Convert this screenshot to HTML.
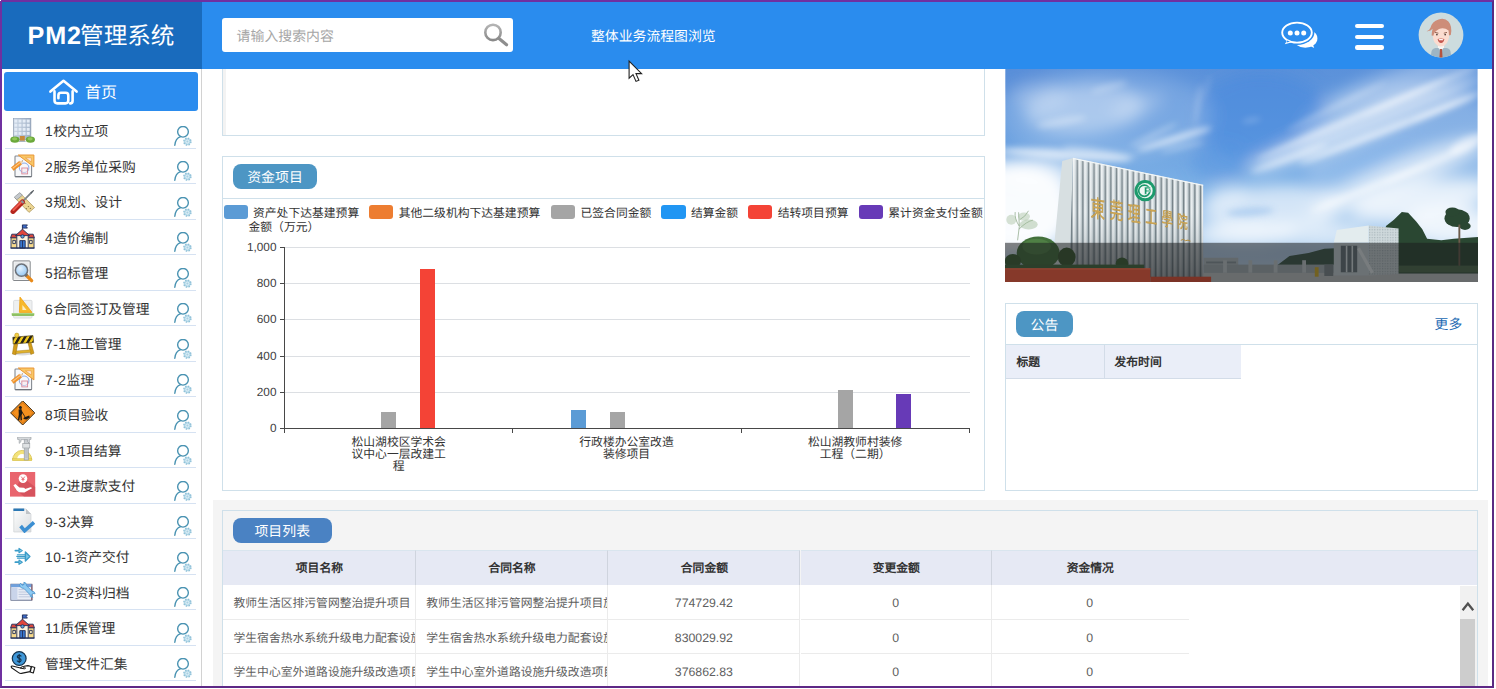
<!DOCTYPE html>
<html lang="zh-CN">
<head>
<meta charset="utf-8">
<title>PM2管理系统</title>
<style>
*{box-sizing:border-box;margin:0;padding:0}
html,body{width:1496px;height:689px;overflow:hidden;background:#fff}
body{font-family:"Liberation Sans",sans-serif;color:#333;position:relative;text-rendering:geometricPrecision}
.abs{position:absolute}
#frame{position:absolute;left:0;top:0;width:1494px;height:688px;border-style:solid;border-width:2px;border-color:#7030a0 #5a2a82 #5e2886 #7030a0;z-index:50;pointer-events:none}
#logo{z-index:6;position:absolute;left:2px;top:2px;width:200px;height:66.5px;background:#196bbd;color:#fff;font-size:23.6px;line-height:66px;white-space:nowrap}
#logo span{position:absolute;left:26px;top:1.4px}
#logo b{font-weight:bold;font-size:25.2px;letter-spacing:0.75px;position:relative;top:-0.7px;margin-right:-1.6px;margin-left:-0.4px}
#hdr{z-index:5;position:absolute;left:202px;top:2px;width:1290px;height:66.5px;background:#2a8cee}
#search{z-index:6;position:absolute;left:222px;top:18px;width:291px;height:34px;background:#fff;border-radius:3px}
#search span{position:absolute;left:14.6px;top:0.9px;line-height:35px;font-size:13.9px;color:#a6a6a6}
#navlink{z-index:6;position:absolute;left:591px;top:27.3px;font-size:13.85px;line-height:18px;color:#fff;white-space:nowrap}
/* sidebar */
#side{position:absolute;left:2px;top:68.5px;width:199.8px;height:618px;background:#fff;border-right:1px solid #d2d2d2}
#home{position:absolute;left:4px;top:72.3px;width:194px;height:39px;background:#2b8cee;border-radius:3px;color:#fff;font-size:16px}
#home span{position:absolute;left:81px;top:11.5px;line-height:20px}
.row{position:absolute;left:5px;width:191px;height:35.5px;border-bottom:1px solid #d6e2f2;font-size:13.75px;color:#333;white-space:nowrap}
.row .t{position:absolute;left:40px;top:10px;line-height:18px}
.row .t i{font-style:normal;letter-spacing:0.5px}
.row .ic{position:absolute;left:5px;top:4.3px;width:25px;height:25px}
.row .u{position:absolute;left:168.1px;top:12.7px;width:20px;height:20px}
/* panels */
.panel{position:absolute;background:#fff;border:1px solid #cfe0ea}
.badge{position:absolute;color:#fff;font-size:13.9px;text-align:center;border-radius:8px;background:#4d96c4;white-space:nowrap}
.lg{position:absolute;top:205.3px;width:24.4px;height:13.8px;border-radius:3px;margin-left:-0.7px}
.lt{position:absolute;margin-left:-0.5px;top:205.6px;font-size:11.8px;line-height:14px;color:#333;white-space:nowrap}
.yl{position:absolute;left:230px;width:46.5px;text-align:right;font-size:11.8px;line-height:14px;color:#3e3e3e}
.xl{position:absolute;width:200px;text-align:center;font-size:11.8px;line-height:12px;color:#333;top:436px}
.gl{position:absolute;left:285px;width:684.5px;height:1px;background:#dcdfe3}
.tk{position:absolute;left:279.6px;width:5px;height:1px;background:#484848}
.bar{position:absolute;width:15.4px}
.th{position:absolute;top:550.3px;height:35.3px;background:#e6e9f4;border-right:1px solid #cfd4de;border-top:1px solid #d9e5ee;border-bottom:1px solid #dadde6;font-size:11.8px;font-weight:bold;color:#333;text-align:center;line-height:34px;white-space:nowrap}
.td{position:absolute;height:34.3px;border-right:1px solid #ebebeb;border-bottom:1px solid #ebebeb;font-size:11.8px;color:#606060;line-height:36px;white-space:nowrap;overflow:hidden;background:#fff}
.td.l{padding-left:10.5px;text-align:left}
.td.c{text-align:center;font-size:12.3px}
</style>
</head>
<body>
<!-- header -->
<div id="hdr"></div>
<div id="logo"><span><b>PM2</b>管理系统</span></div>
<div id="search"><span>请输入搜索内容</span></div>
<div id="navlink">整体业务流程图浏览</div>

<!-- sidebar -->
<div id="side"></div>
<div id="home"><svg class="abs" style="left:42.5px;top:5px" width="34" height="32" viewBox="0 0 34 32"><g fill="none" stroke="#fff" stroke-width="2.6" stroke-linecap="round" stroke-linejoin="round"><path d="M3.4 14.6 L16.5 3.8 L29.6 14.6"/><path d="M7.5 14.4 V23.6 Q7.5 26.4 10.4 26.4 H18.4 Q21.3 26.4 21.3 23.6 V18.4 Q21.3 15.8 18.7 15.8 H14 Q11.4 15.8 11.4 18.4 V21.2"/><path d="M25.6 14.4 V23.8 Q25.6 26.4 23.2 26.4"/></g></svg><span>首页</span></div>

<!-- top empty panel -->
<div class="panel" style="left:222px;top:60px;width:763px;height:76px"></div>
<div class="abs" style="left:223px;top:68.5px;width:3px;height:66px;background:#f3f3f3"></div>

<!-- chart panel -->
<div class="panel" style="left:222px;top:156px;width:763px;height:334.5px"></div>
<div class="abs" style="left:222px;top:197.5px;width:763px;height:1px;background:#cfe0ea"></div>
<div class="badge" style="left:233px;top:163.5px;width:84px;height:25px;line-height:27.4px">资金项目</div>

<!-- gray section -->
<div class="abs" style="left:213px;top:499.5px;width:1275px;height:187px;background:#f4f4f4"></div>
<div class="panel" style="left:222px;top:510px;width:1256px;height:180px;background:#f4f4f4"></div>
<div class="badge" style="left:233px;top:518.3px;width:98.5px;height:25px;line-height:27px;background:#4a82c3">项目列表</div>

<!-- notice panel -->
<div class="panel" style="left:1005px;top:303px;width:473px;height:187.5px"></div>
<div class="abs" style="left:1005px;top:343.7px;width:473px;height:1px;background:#cfe0ea"></div>
<div class="badge" style="left:1016px;top:311px;width:57px;height:26px;line-height:28px">公告</div>
<div class="abs" style="left:1434.6px;top:315.2px;font-size:13.8px;line-height:20px;color:#2268b2;white-space:nowrap">更多</div>
<div class="abs" style="left:1006px;top:344.7px;width:235px;height:34px;background:#eaeef8;border-bottom:1px solid #d3dce8"></div>
<div class="abs" style="left:1104px;top:344.7px;width:1px;height:34px;background:#d3dce8"></div>
<div class="abs" style="left:1016.5px;top:353px;font-size:11.8px;font-weight:bold;line-height:18px;color:#333;white-space:nowrap">标题</div>
<div class="abs" style="left:1114.5px;top:353px;font-size:11.8px;font-weight:bold;line-height:18px;color:#333;white-space:nowrap">发布时间</div>

<div class="row" style="top:113.3px"><div class="ic"><svg width="25" height="25" viewBox="0 0 25 25"><defs><linearGradient id="bl1" x1="0" y1="0" x2="1" y2="0"><stop offset="0" stop-color="#c9d5e4"/><stop offset="1" stop-color="#9fb0c6"/></linearGradient></defs><rect x="3.3" y="0" width="17.6" height="21.4" fill="url(#bl1)" stroke="#8595aa" stroke-width="0.6"/><g fill="#e4ecf6"><rect x="4.4" y="1.6" width="3" height="3"/><rect x="8.5" y="1.6" width="3" height="3"/><rect x="12.6" y="1.6" width="3" height="3"/><rect x="16.7" y="1.6" width="3" height="3"/><rect x="4.4" y="5.7" width="3" height="3"/><rect x="8.5" y="5.7" width="3" height="3"/><rect x="12.6" y="5.7" width="3" height="3"/><rect x="16.7" y="5.7" width="3" height="3"/><rect x="4.4" y="9.8" width="3" height="3"/><rect x="8.5" y="9.8" width="3" height="3"/><rect x="12.6" y="9.8" width="3" height="3"/><rect x="16.7" y="9.8" width="3" height="3"/><rect x="4.4" y="13.9" width="3" height="3"/><rect x="8.5" y="13.9" width="3" height="3"/><rect x="12.6" y="13.9" width="3" height="3"/><rect x="16.7" y="13.9" width="3" height="3"/></g><rect x="9.8" y="18" width="5" height="5.2" fill="#c98a3c"/><rect x="9" y="22.6" width="6.6" height="1.4" fill="#a8b4bf"/><ellipse cx="4.9" cy="21.6" rx="4.6" ry="3.2" fill="#6aa83a"/><ellipse cx="20.4" cy="21.6" rx="4.6" ry="3.2" fill="#6aa83a"/><ellipse cx="4.6" cy="20.8" rx="2.6" ry="1.6" fill="#93c85a"/><ellipse cx="20.1" cy="20.8" rx="2.6" ry="1.6" fill="#93c85a"/></svg>
</div><div class="t"><i>1</i>校内立项</div><div class="u"><svg width="20" height="20" viewBox="0 0 20 20"><circle cx="10" cy="5.8" r="5.35" fill="none" stroke="#4a93b2" stroke-width="1.4"/><path d="M1.8 19.2 Q2.4 12.4 7.6 10.6" fill="none" stroke="#4a93b2" stroke-width="1.4" stroke-linecap="round"/><circle cx="14.4" cy="15.6" r="3.5" fill="#cfe6f1" stroke="#8fc1d8" stroke-width="1.5" stroke-dasharray="1.5 1.25"/><circle cx="14.4" cy="15.6" r="2.6" fill="#d9ecf5" stroke="#9ccbe0" stroke-width="0.8"/><circle cx="14.4" cy="15.6" r="1" fill="#a9d0e2"/></svg>
</div></div>
<div class="row" style="top:148.8px"><div class="ic"><svg width="25" height="25" viewBox="0 0 25 25"><rect x="5" y="3" width="16.6" height="20.8" rx="0.8" fill="#f7f8fa" stroke="#858a92" stroke-width="1.1"/><path d="M5.2 23.6 H21.4" stroke="#6f747c" stroke-width="1.2"/><circle cx="14.1" cy="14.8" r="4.8" fill="none" stroke="#7da0e4" stroke-width="0.9"/><rect x="11.8" y="15" width="5.8" height="5.9" fill="#f6e6ec" fill-opacity="0.5" stroke="#d98a9a" stroke-width="0.9"/><path d="M8.3 2 L23.9 2 L23.9 13.9 Z" fill="#f8c766" stroke="#ea9636" stroke-width="1" stroke-linejoin="round"/><path d="M15.5 4.8 L21.3 4.8 L21.3 9 Z" fill="#fbe9e0" stroke="#ea9636" stroke-width="0.6"/><path d="M3.6 17.4 L1.4 14.4 L9.4 8.2 L11.7 11.2 Z" fill="#f4952a" stroke="#de7c12" stroke-width="0.5"/><path d="M2.6 15.4 L10.2 9.6" stroke="#fcc88a" stroke-width="1.1"/><path d="M9.4 8.2 L13 7.4 L11.7 11.2 Z" fill="#f3d3ac"/><path d="M12 7.7 L13 7.4 L12.6 8.5 Z" fill="#444"/></svg>
</div><div class="t"><i>2</i>服务单位采购</div><div class="u"><svg width="20" height="20" viewBox="0 0 20 20"><circle cx="10" cy="5.8" r="5.35" fill="none" stroke="#4a93b2" stroke-width="1.4"/><path d="M1.8 19.2 Q2.4 12.4 7.6 10.6" fill="none" stroke="#4a93b2" stroke-width="1.4" stroke-linecap="round"/><circle cx="14.4" cy="15.6" r="3.5" fill="#cfe6f1" stroke="#8fc1d8" stroke-width="1.5" stroke-dasharray="1.5 1.25"/><circle cx="14.4" cy="15.6" r="2.6" fill="#d9ecf5" stroke="#9ccbe0" stroke-width="0.8"/><circle cx="14.4" cy="15.6" r="1" fill="#a9d0e2"/></svg>
</div></div>
<div class="row" style="top:184.3px"><div class="ic"><svg width="25" height="25" viewBox="0 0 25 25"><path d="M5 9 L10.4 4.6 L24.6 18.6 L19 23.4 Z" fill="#ecd592" stroke="#a8925a" stroke-width="0.7" stroke-linejoin="round"/><path d="M4.2 8.2 L9.8 3.6 L12.4 6.2 L6.8 10.8 Z" fill="#c4c8cc" stroke="#80868c" stroke-width="0.6"/><g fill="#8a7a4a"><circle cx="15" cy="14.4" r="0.7"/><circle cx="18.4" cy="17.6" r="0.7"/><circle cx="16.4" cy="19.6" r="0.7"/><circle cx="20.4" cy="19.4" r="0.7"/></g><path d="M13 12.2 L21.6 3.4" stroke="#7c8288" stroke-width="1.7" stroke-linecap="round"/><path d="M21.2 3.8 L23.4 1.6" stroke="#555b60" stroke-width="1.3" stroke-linecap="round"/><path d="M3 22.4 L12.4 13" stroke="#b5251d" stroke-width="5" stroke-linecap="round"/><path d="M3.4 21 L11.4 13" stroke="#ee5a4c" stroke-width="2" stroke-linecap="round"/><path d="M11.4 11.8 L13.6 14" stroke="#8d9399" stroke-width="2.2"/></svg>
</div><div class="t"><i>3</i>规划、设计</div><div class="u"><svg width="20" height="20" viewBox="0 0 20 20"><circle cx="10" cy="5.8" r="5.35" fill="none" stroke="#4a93b2" stroke-width="1.4"/><path d="M1.8 19.2 Q2.4 12.4 7.6 10.6" fill="none" stroke="#4a93b2" stroke-width="1.4" stroke-linecap="round"/><circle cx="14.4" cy="15.6" r="3.5" fill="#cfe6f1" stroke="#8fc1d8" stroke-width="1.5" stroke-dasharray="1.5 1.25"/><circle cx="14.4" cy="15.6" r="2.6" fill="#d9ecf5" stroke="#9ccbe0" stroke-width="0.8"/><circle cx="14.4" cy="15.6" r="1" fill="#a9d0e2"/></svg>
</div></div>
<div class="row" style="top:219.7px"><div class="ic"><svg width="25" height="25" viewBox="0 0 25 25"><g stroke="#23305a" stroke-width="0.9" stroke-linejoin="round"><path d="M12.4 0.8 V6" fill="none"/><path d="M12.6 0.9 H17.4 L16.2 2.5 L17.4 4.1 H12.6 Z" fill="#3d6fd0"/><rect x="1" y="13.6" width="6.6" height="10.4" fill="#f6d98a"/><rect x="17.4" y="13.6" width="6.6" height="10.4" fill="#f6d98a"/><path d="M0.6 13.8 L1.8 10.2 H7.6 V13.8 Z" fill="#d8483e"/><path d="M24.4 13.8 L23.2 10.2 H17.4 V13.8 Z" fill="#d8483e"/><rect x="6.8" y="10.6" width="11.4" height="13.4" fill="#fbf1dc"/><path d="M5.4 11.6 L12.5 5.2 L19.6 11.6 Z" fill="#e0453b"/><circle cx="12.5" cy="12.4" r="1.7" fill="#5ea2dc"/><rect x="9.8" y="16.6" width="5.4" height="7.4" fill="#3a78d0"/><path d="M12.5 16.6 V24" fill="none"/><rect x="2.8" y="16.4" width="2.6" height="3.2" fill="#fbeec4"/><rect x="19.6" y="16.4" width="2.6" height="3.2" fill="#fbeec4"/><path d="M0.4 24.1 H24.6" fill="none" stroke-width="1.1"/></g></svg>
</div><div class="t"><i>4</i>造价编制</div><div class="u"><svg width="20" height="20" viewBox="0 0 20 20"><circle cx="10" cy="5.8" r="5.35" fill="none" stroke="#4a93b2" stroke-width="1.4"/><path d="M1.8 19.2 Q2.4 12.4 7.6 10.6" fill="none" stroke="#4a93b2" stroke-width="1.4" stroke-linecap="round"/><circle cx="14.4" cy="15.6" r="3.5" fill="#cfe6f1" stroke="#8fc1d8" stroke-width="1.5" stroke-dasharray="1.5 1.25"/><circle cx="14.4" cy="15.6" r="2.6" fill="#d9ecf5" stroke="#9ccbe0" stroke-width="0.8"/><circle cx="14.4" cy="15.6" r="1" fill="#a9d0e2"/></svg>
</div></div>
<div class="row" style="top:255.2px"><div class="ic"><svg width="25" height="25" viewBox="0 0 25 25"><defs><radialGradient id="ln" cx="0.4" cy="0.35" r="0.7"><stop offset="0" stop-color="#e4f2ff"/><stop offset="1" stop-color="#8fc4f2"/></radialGradient></defs><rect x="3" y="1.9" width="17.2" height="19.6" rx="1" fill="#f2f3f4" stroke="#85888c" stroke-width="1"/><rect x="4.6" y="3.5" width="14" height="16.4" fill="#e6e8ea"/><path d="M16 16 L21.6 21.6" stroke="#e88a1a" stroke-width="3.4" stroke-linecap="round"/><path d="M15.6 15.6 L17 17" stroke="#6a6e74" stroke-width="3"/><circle cx="11.5" cy="11.2" r="6.1" fill="url(#ln)" stroke="#6d727a" stroke-width="1.5"/></svg>
</div><div class="t"><i>5</i>招标管理</div><div class="u"><svg width="20" height="20" viewBox="0 0 20 20"><circle cx="10" cy="5.8" r="5.35" fill="none" stroke="#4a93b2" stroke-width="1.4"/><path d="M1.8 19.2 Q2.4 12.4 7.6 10.6" fill="none" stroke="#4a93b2" stroke-width="1.4" stroke-linecap="round"/><circle cx="14.4" cy="15.6" r="3.5" fill="#cfe6f1" stroke="#8fc1d8" stroke-width="1.5" stroke-dasharray="1.5 1.25"/><circle cx="14.4" cy="15.6" r="2.6" fill="#d9ecf5" stroke="#9ccbe0" stroke-width="0.8"/><circle cx="14.4" cy="15.6" r="1" fill="#a9d0e2"/></svg>
</div></div>
<div class="row" style="top:290.7px"><div class="ic"><svg width="25" height="25" viewBox="0 0 25 25"><rect x="3.6" y="5.4" width="18.4" height="17.6" rx="1" fill="#eef0f1" stroke="#d3d6d9" stroke-width="0.8"/><path d="M10 2.1 L22 17.4 L9.4 17.4 Z" fill="#f7b92c" stroke="#f0a010" stroke-width="0.8" stroke-linejoin="round"/><path d="M12.4 10 L16.6 15 L12.4 15 Z" fill="#fdecc0"/><rect x="1.7" y="17.9" width="22.6" height="3.2" rx="1" fill="#8ec063"/><rect x="1.7" y="17.9" width="22.6" height="1.2" rx="0.6" fill="#a9d484"/></svg>
</div><div class="t"><i>6</i>合同签订及管理</div><div class="u"><svg width="20" height="20" viewBox="0 0 20 20"><circle cx="10" cy="5.8" r="5.35" fill="none" stroke="#4a93b2" stroke-width="1.4"/><path d="M1.8 19.2 Q2.4 12.4 7.6 10.6" fill="none" stroke="#4a93b2" stroke-width="1.4" stroke-linecap="round"/><circle cx="14.4" cy="15.6" r="3.5" fill="#cfe6f1" stroke="#8fc1d8" stroke-width="1.5" stroke-dasharray="1.5 1.25"/><circle cx="14.4" cy="15.6" r="2.6" fill="#d9ecf5" stroke="#9ccbe0" stroke-width="0.8"/><circle cx="14.4" cy="15.6" r="1" fill="#a9d0e2"/></svg>
</div></div>
<div class="row" style="top:326.2px"><div class="ic"><svg width="25" height="26" viewBox="0 0 25 26"><defs><pattern id="hz" width="5.6" height="8" patternUnits="userSpaceOnUse" patternTransform="skewX(-30)"><rect width="5.6" height="8" fill="#f5cc1c"/><rect width="2.9" height="8" fill="#2a2418"/></pattern></defs><g transform="translate(0 1.6)"><ellipse cx="12.5" cy="21.8" rx="9.8" ry="2" fill="#dcdcdc"/><path d="M5.2 5.2 L2.4 22.4 L5.8 23.2 L8.8 6 Z" fill="#d29c1a" stroke="#9c700c" stroke-width="0.5"/><path d="M19.4 5.2 L24 21.6 L20.8 22.8 L16.8 6 Z" fill="#d29c1a" stroke="#9c700c" stroke-width="0.5"/><path d="M6.2 19.4 L20.6 18.2 L21 20.6 L6 22 Z" fill="#e0b22c" stroke="#9c700c" stroke-width="0.4"/><path d="M2.8 5.6 L23 4 L23.6 10.8 L3.2 12.4 Z" fill="url(#hz)" stroke="#4a3c10" stroke-width="0.6"/><circle cx="6.8" cy="3.6" r="2.1" fill="#f2cf46" stroke="#b0840f" stroke-width="0.5"/></g></svg>
</div><div class="t"><i>7-1</i>施工管理</div><div class="u"><svg width="20" height="20" viewBox="0 0 20 20"><circle cx="10" cy="5.8" r="5.35" fill="none" stroke="#4a93b2" stroke-width="1.4"/><path d="M1.8 19.2 Q2.4 12.4 7.6 10.6" fill="none" stroke="#4a93b2" stroke-width="1.4" stroke-linecap="round"/><circle cx="14.4" cy="15.6" r="3.5" fill="#cfe6f1" stroke="#8fc1d8" stroke-width="1.5" stroke-dasharray="1.5 1.25"/><circle cx="14.4" cy="15.6" r="2.6" fill="#d9ecf5" stroke="#9ccbe0" stroke-width="0.8"/><circle cx="14.4" cy="15.6" r="1" fill="#a9d0e2"/></svg>
</div></div>
<div class="row" style="top:361.7px"><div class="ic"><svg width="25" height="25" viewBox="0 0 25 25"><rect x="5" y="3" width="16.6" height="20.8" rx="0.8" fill="#f7f8fa" stroke="#858a92" stroke-width="1.1"/><path d="M5.2 23.6 H21.4" stroke="#6f747c" stroke-width="1.2"/><circle cx="14.1" cy="14.8" r="4.8" fill="none" stroke="#7da0e4" stroke-width="0.9"/><rect x="11.8" y="15" width="5.8" height="5.9" fill="#f6e6ec" fill-opacity="0.5" stroke="#d98a9a" stroke-width="0.9"/><path d="M8.3 2 L23.9 2 L23.9 13.9 Z" fill="#f8c766" stroke="#ea9636" stroke-width="1" stroke-linejoin="round"/><path d="M15.5 4.8 L21.3 4.8 L21.3 9 Z" fill="#fbe9e0" stroke="#ea9636" stroke-width="0.6"/><path d="M3.6 17.4 L1.4 14.4 L9.4 8.2 L11.7 11.2 Z" fill="#f4952a" stroke="#de7c12" stroke-width="0.5"/><path d="M2.6 15.4 L10.2 9.6" stroke="#fcc88a" stroke-width="1.1"/><path d="M9.4 8.2 L13 7.4 L11.7 11.2 Z" fill="#f3d3ac"/><path d="M12 7.7 L13 7.4 L12.6 8.5 Z" fill="#444"/></svg>
</div><div class="t"><i>7-2</i>监理</div><div class="u"><svg width="20" height="20" viewBox="0 0 20 20"><circle cx="10" cy="5.8" r="5.35" fill="none" stroke="#4a93b2" stroke-width="1.4"/><path d="M1.8 19.2 Q2.4 12.4 7.6 10.6" fill="none" stroke="#4a93b2" stroke-width="1.4" stroke-linecap="round"/><circle cx="14.4" cy="15.6" r="3.5" fill="#cfe6f1" stroke="#8fc1d8" stroke-width="1.5" stroke-dasharray="1.5 1.25"/><circle cx="14.4" cy="15.6" r="2.6" fill="#d9ecf5" stroke="#9ccbe0" stroke-width="0.8"/><circle cx="14.4" cy="15.6" r="1" fill="#a9d0e2"/></svg>
</div></div>
<div class="row" style="top:397.1px"><div class="ic"><svg width="25" height="25" viewBox="0 0 25 25"><path d="M12.7 -0.2 L24.8 11.9 L12.7 24 L0.6 11.9 Z" fill="#f5901e" stroke="#3a2a14" stroke-width="1" stroke-linejoin="round"/><path d="M12.7 1.8 L22.8 11.9 L12.7 22 L2.6 11.9 Z" fill="none" stroke="#c96a0c" stroke-width="0.6"/><g fill="#1e1a16"><circle cx="10.4" cy="6.4" r="1.5"/><path d="M8.6 8.4 L11.4 8 L12.4 12.2 L11.6 14.2 L12 19.2 L10.6 19.2 L10.2 15 L9.2 19.2 L7.8 19.2 L8.8 13.4 Z"/><path d="M11.6 9.6 L15.6 16.2 L15 16.6 L11 10 Z"/><path d="M14 16.4 L19.2 14.4 L19.8 16.6 L16.4 18.4 L13.4 18 Z"/></g></svg>
</div><div class="t"><i>8</i>项目验收</div><div class="u"><svg width="20" height="20" viewBox="0 0 20 20"><circle cx="10" cy="5.8" r="5.35" fill="none" stroke="#4a93b2" stroke-width="1.4"/><path d="M1.8 19.2 Q2.4 12.4 7.6 10.6" fill="none" stroke="#4a93b2" stroke-width="1.4" stroke-linecap="round"/><circle cx="14.4" cy="15.6" r="3.5" fill="#cfe6f1" stroke="#8fc1d8" stroke-width="1.5" stroke-dasharray="1.5 1.25"/><circle cx="14.4" cy="15.6" r="2.6" fill="#d9ecf5" stroke="#9ccbe0" stroke-width="0.8"/><circle cx="14.4" cy="15.6" r="1" fill="#a9d0e2"/></svg>
</div></div>
<div class="row" style="top:432.6px"><div class="ic"><svg width="25" height="25" viewBox="0 0 25 25"><path d="M2.6 23 A9.6 9.6 0 0 1 21.8 23 Z" fill="#f3e27a" stroke="#d6c04a" stroke-width="0.8"/><path d="M7.2 22 A5 5 0 0 1 17.2 22 Z" fill="#fff"/><rect x="2.6" y="21.6" width="19.2" height="2" fill="#ecd860" stroke="#d6c04a" stroke-width="0.5"/><rect x="14.2" y="0.4" width="4.2" height="22.6" fill="#c9cdd1" stroke="#92979c" stroke-width="0.6"/><path d="M7.6 0 H21 V2.4 H19.4 V6.4 L17.6 4.6 V2.6 H11 V4.6 L9.2 6.4 V2.4 H7.6 Z" fill="#d6d9dc" stroke="#92979c" stroke-width="0.6" stroke-linejoin="round"/><rect x="12.8" y="6.6" width="7" height="4.4" fill="#dfe2e4" stroke="#92979c" stroke-width="0.6"/><path d="M15.2 12 V21 M16.4 12 V21 M17.4 12 V21" stroke="#a4a9ae" stroke-width="0.3"/></svg>
</div><div class="t"><i>9-1</i>项目结算</div><div class="u"><svg width="20" height="20" viewBox="0 0 20 20"><circle cx="10" cy="5.8" r="5.35" fill="none" stroke="#4a93b2" stroke-width="1.4"/><path d="M1.8 19.2 Q2.4 12.4 7.6 10.6" fill="none" stroke="#4a93b2" stroke-width="1.4" stroke-linecap="round"/><circle cx="14.4" cy="15.6" r="3.5" fill="#cfe6f1" stroke="#8fc1d8" stroke-width="1.5" stroke-dasharray="1.5 1.25"/><circle cx="14.4" cy="15.6" r="2.6" fill="#d9ecf5" stroke="#9ccbe0" stroke-width="0.8"/><circle cx="14.4" cy="15.6" r="1" fill="#a9d0e2"/></svg>
</div></div>
<div class="row" style="top:468.1px"><div class="ic"><svg width="26" height="25" viewBox="0 0 26 25"><rect x="0" y="0" width="25.2" height="24.6" fill="#e9656e"/><path d="M12 5 L25.2 15 V24.6 H14 L5 17 Z" fill="#cf4e58" opacity="0.75"/><circle cx="13" cy="6.6" r="4.3" fill="#fff"/><path d="M11.2 4.6 L13 7 L14.8 4.6 M13 7 V9.4 M11.4 7.4 H14.6" stroke="#e9656e" stroke-width="0.9" fill="none"/><path d="M3.4 13.2 L5.4 12 L9.4 15.6 L13.4 15.8 Q15 15.8 15 17 L19.6 15.4 Q21.6 14.8 22 16.2 L14.4 20.4 L9 20.2 L6.8 18.6 Z" fill="#fff"/></svg>
</div><div class="t"><i>9-2</i>进度款支付</div><div class="u"><svg width="20" height="20" viewBox="0 0 20 20"><circle cx="10" cy="5.8" r="5.35" fill="none" stroke="#4a93b2" stroke-width="1.4"/><path d="M1.8 19.2 Q2.4 12.4 7.6 10.6" fill="none" stroke="#4a93b2" stroke-width="1.4" stroke-linecap="round"/><circle cx="14.4" cy="15.6" r="3.5" fill="#cfe6f1" stroke="#8fc1d8" stroke-width="1.5" stroke-dasharray="1.5 1.25"/><circle cx="14.4" cy="15.6" r="2.6" fill="#d9ecf5" stroke="#9ccbe0" stroke-width="0.8"/><circle cx="14.4" cy="15.6" r="1" fill="#a9d0e2"/></svg>
</div></div>
<div class="row" style="top:503.6px"><div class="ic"><svg width="25" height="25" viewBox="0 0 25 25"><defs><linearGradient id="dg" x1="0" y1="0" x2="1" y2="1"><stop offset="0" stop-color="#fdfdfd"/><stop offset="1" stop-color="#d9dde0"/></linearGradient></defs><path d="M3.8 1 H16 L21 6 V24 H3.8 Z" fill="url(#dg)" stroke="#d0d3d6" stroke-width="0.7"/><path d="M16 1 V6 H21 Z" fill="#bfc3c7"/><rect x="3.4" y="0.5" width="10.8" height="2.5" fill="#2c78b4"/><path d="M10.6 18 L14.6 22.8 L24 14.4" fill="none" stroke="#3c8fd2" stroke-width="3.6" stroke-linejoin="miter"/></svg>
</div><div class="t"><i>9-3</i>决算</div><div class="u"><svg width="20" height="20" viewBox="0 0 20 20"><circle cx="10" cy="5.8" r="5.35" fill="none" stroke="#4a93b2" stroke-width="1.4"/><path d="M1.8 19.2 Q2.4 12.4 7.6 10.6" fill="none" stroke="#4a93b2" stroke-width="1.4" stroke-linecap="round"/><circle cx="14.4" cy="15.6" r="3.5" fill="#cfe6f1" stroke="#8fc1d8" stroke-width="1.5" stroke-dasharray="1.5 1.25"/><circle cx="14.4" cy="15.6" r="2.6" fill="#d9ecf5" stroke="#9ccbe0" stroke-width="0.8"/><circle cx="14.4" cy="15.6" r="1" fill="#a9d0e2"/></svg>
</div></div>
<div class="row" style="top:539.1px"><div class="ic"><svg width="25" height="25" viewBox="0 0 25 25"><g transform="translate(0 0.9)" fill="none" stroke="#3a9cc8" stroke-linejoin="round" stroke-linecap="round"><path d="M5.4 6.7 H9.4" stroke-width="1.8"/><path d="M9 4.5 L12.3 6.7 L9 8.9 Z" fill="#8fd0ea" stroke-width="1.1"/><path d="M5.4 18.3 H9.4" stroke-width="1.8"/><path d="M9 16.1 L12.3 18.3 L9 20.5 Z" fill="#8fd0ea" stroke-width="1.1"/><path d="M7.4 10.8 H15.4 M6.8 12.5 H15.4 M7.4 14.2 H15.4" stroke-width="1.15"/><path d="M15.4 8 L19.9 12.5 L15.4 17 Z" fill="#7cc6e6" stroke-width="1.4"/></g></svg>
</div><div class="t"><i>10-1</i>资产交付</div><div class="u"><svg width="20" height="20" viewBox="0 0 20 20"><circle cx="10" cy="5.8" r="5.35" fill="none" stroke="#4a93b2" stroke-width="1.4"/><path d="M1.8 19.2 Q2.4 12.4 7.6 10.6" fill="none" stroke="#4a93b2" stroke-width="1.4" stroke-linecap="round"/><circle cx="14.4" cy="15.6" r="3.5" fill="#cfe6f1" stroke="#8fc1d8" stroke-width="1.5" stroke-dasharray="1.5 1.25"/><circle cx="14.4" cy="15.6" r="2.6" fill="#d9ecf5" stroke="#9ccbe0" stroke-width="0.8"/><circle cx="14.4" cy="15.6" r="1" fill="#a9d0e2"/></svg>
</div></div>
<div class="row" style="top:574.5px"><div class="ic"><svg width="26" height="25" viewBox="0 0 26 25"><rect x="0.9" y="5.2" width="21" height="16" fill="#e9edf6" stroke="#4a5578" stroke-width="0.8"/><rect x="0.9" y="5.2" width="21" height="2.9" fill="#6fa0dc"/><rect x="1.4" y="8.4" width="6" height="12.4" fill="#c9d4ea"/><path d="M8.6 10.6 H20.6 M8.6 13 H20.6 M8.6 15.4 H20.6 M8.6 17.8 H20.6" stroke="#b4bfd8" stroke-width="0.8"/><path d="M21.9 5.4 V21.2" stroke="#8a4a50" stroke-width="0.9"/><path transform="translate(-0.6 1.6) scale(1.02)" d="M10.4 5.6 Q9.4 3.6 11 2.6 L12.6 4.6 L14.4 3.8 L14.2 1.6 Q17 2 16.8 5 L22.4 10.6 Q24.6 10.2 25.2 13 L23 12.6 L21.8 14.2 L23 16.4 Q20.2 16.4 20 13.6 L14.2 7.6 Q11.6 8 10.4 5.6 Z" fill="#8ecaf2" stroke="#4a94cc" stroke-width="0.8" stroke-linejoin="round"/></svg>
</div><div class="t"><i>10-2</i>资料归档</div><div class="u"><svg width="20" height="20" viewBox="0 0 20 20"><circle cx="10" cy="5.8" r="5.35" fill="none" stroke="#4a93b2" stroke-width="1.4"/><path d="M1.8 19.2 Q2.4 12.4 7.6 10.6" fill="none" stroke="#4a93b2" stroke-width="1.4" stroke-linecap="round"/><circle cx="14.4" cy="15.6" r="3.5" fill="#cfe6f1" stroke="#8fc1d8" stroke-width="1.5" stroke-dasharray="1.5 1.25"/><circle cx="14.4" cy="15.6" r="2.6" fill="#d9ecf5" stroke="#9ccbe0" stroke-width="0.8"/><circle cx="14.4" cy="15.6" r="1" fill="#a9d0e2"/></svg>
</div></div>
<div class="row" style="top:610.0px"><div class="ic"><svg width="25" height="25" viewBox="0 0 25 25"><g stroke="#23305a" stroke-width="0.9" stroke-linejoin="round"><path d="M12.4 0.8 V6" fill="none"/><path d="M12.6 0.9 H17.4 L16.2 2.5 L17.4 4.1 H12.6 Z" fill="#3d6fd0"/><rect x="1" y="13.6" width="6.6" height="10.4" fill="#f6d98a"/><rect x="17.4" y="13.6" width="6.6" height="10.4" fill="#f6d98a"/><path d="M0.6 13.8 L1.8 10.2 H7.6 V13.8 Z" fill="#d8483e"/><path d="M24.4 13.8 L23.2 10.2 H17.4 V13.8 Z" fill="#d8483e"/><rect x="6.8" y="10.6" width="11.4" height="13.4" fill="#fbf1dc"/><path d="M5.4 11.6 L12.5 5.2 L19.6 11.6 Z" fill="#e0453b"/><circle cx="12.5" cy="12.4" r="1.7" fill="#5ea2dc"/><rect x="9.8" y="16.6" width="5.4" height="7.4" fill="#3a78d0"/><path d="M12.5 16.6 V24" fill="none"/><rect x="2.8" y="16.4" width="2.6" height="3.2" fill="#fbeec4"/><rect x="19.6" y="16.4" width="2.6" height="3.2" fill="#fbeec4"/><path d="M0.4 24.1 H24.6" fill="none" stroke-width="1.1"/></g></svg>
</div><div class="t"><i>11</i>质保管理</div><div class="u"><svg width="20" height="20" viewBox="0 0 20 20"><circle cx="10" cy="5.8" r="5.35" fill="none" stroke="#4a93b2" stroke-width="1.4"/><path d="M1.8 19.2 Q2.4 12.4 7.6 10.6" fill="none" stroke="#4a93b2" stroke-width="1.4" stroke-linecap="round"/><circle cx="14.4" cy="15.6" r="3.5" fill="#cfe6f1" stroke="#8fc1d8" stroke-width="1.5" stroke-dasharray="1.5 1.25"/><circle cx="14.4" cy="15.6" r="2.6" fill="#d9ecf5" stroke="#9ccbe0" stroke-width="0.8"/><circle cx="14.4" cy="15.6" r="1" fill="#a9d0e2"/></svg>
</div></div>
<div class="row" style="top:645.5px"><div class="ic"><svg width="26" height="28" viewBox="0 0 26 28"><circle cx="9.2" cy="8.5" r="6.9" fill="#3f97d8" stroke="#14324c" stroke-width="1.2"/><path d="M11.4 6.4 Q9.6 4.7 7.8 5.8 Q6.4 7.2 9.2 8.4 Q12 9.6 10.6 11.2 Q8.8 12.4 6.9 10.6 M9.2 4 V13" fill="none" stroke="#14324c" stroke-width="1.2"/><path d="M1.2 16.8 Q1 15.8 2.4 16 L10.4 18 Q11.4 16.4 14 16.2 L18 15.6 Q19.6 15.6 21.2 17.2 L20 21.6 L11.4 23.4 Q10 23.6 8.6 22.6 L1.6 17.8 Z" fill="#fff" stroke="#1a1a1a" stroke-width="1.1" stroke-linejoin="round"/><path d="M10.6 18.2 L14.4 18.8 Q15.6 18.8 15.4 17.8 Q15 17.1 13.6 17.3" fill="none" stroke="#1a1a1a" stroke-width="1" stroke-linecap="round"/><path d="M21.7 16.4 L24.8 17.6 L23.3 23 L20.2 21.9 Z" fill="#fff" stroke="#1a1a1a" stroke-width="1.1" stroke-linejoin="round"/></svg>
</div><div class="t">管理文件汇集</div><div class="u"><svg width="20" height="20" viewBox="0 0 20 20"><circle cx="10" cy="5.8" r="5.35" fill="none" stroke="#4a93b2" stroke-width="1.4"/><path d="M1.8 19.2 Q2.4 12.4 7.6 10.6" fill="none" stroke="#4a93b2" stroke-width="1.4" stroke-linecap="round"/><circle cx="14.4" cy="15.6" r="3.5" fill="#cfe6f1" stroke="#8fc1d8" stroke-width="1.5" stroke-dasharray="1.5 1.25"/><circle cx="14.4" cy="15.6" r="2.6" fill="#d9ecf5" stroke="#9ccbe0" stroke-width="0.8"/><circle cx="14.4" cy="15.6" r="1" fill="#a9d0e2"/></svg>
</div></div>
<!-- chart -->
<div class="lg" style="left:224.5px;background:#5b9bd5"></div><div class="lt" style="left:253.5px">资产处下达基建预算</div>
<div class="lg" style="left:369.5px;background:#ed7d31"></div><div class="lt" style="left:399.2px">其他二级机构下达基建预算</div>
<div class="lg" style="left:551.2px;background:#a5a5a5"></div><div class="lt" style="left:581.0px">已签合同金额</div>
<div class="lg" style="left:661.8px;background:#2196f3"></div><div class="lt" style="left:691.4px">结算金额</div>
<div class="lg" style="left:748.6px;background:#f44336"></div><div class="lt" style="left:778.2px">结转项目预算</div>
<div class="lg" style="left:859.2px;background:#673ab7"></div><div class="lt" style="left:888.8px">累计资金支付金额</div>
<div class="lt" style="left:249px;top:219.5px">金额（万元）</div>
<div class="gl" style="top:246.9px"></div><div class="tk" style="top:246.9px"></div><div class="yl" style="top:239.9px">1,000</div>
<div class="gl" style="top:283.1px"></div><div class="tk" style="top:283.1px"></div><div class="yl" style="top:276.1px">800</div>
<div class="gl" style="top:319.3px"></div><div class="tk" style="top:319.3px"></div><div class="yl" style="top:312.3px">600</div>
<div class="gl" style="top:355.5px"></div><div class="tk" style="top:355.5px"></div><div class="yl" style="top:348.5px">400</div>
<div class="gl" style="top:391.7px"></div><div class="tk" style="top:391.7px"></div><div class="yl" style="top:384.7px">200</div>
<div class="tk" style="top:427.9px"></div><div class="yl" style="top:420.9px">0</div>
<div class="abs" style="left:284.2px;top:247px;width:1px;height:182px;background:#484848"></div>
<div class="abs" style="left:284.2px;top:427.9px;width:685.5px;height:1px;background:#484848"></div>
<div class="abs" style="left:284.2px;top:428.4px;width:1px;height:5px;background:#484848"></div><div class="abs" style="left:512.2px;top:428.4px;width:1px;height:5px;background:#484848"></div><div class="abs" style="left:740.6px;top:428.4px;width:1px;height:5px;background:#484848"></div><div class="abs" style="left:968.7px;top:428.4px;width:1px;height:5px;background:#484848"></div>
<div class="bar" style="left:381.1px;top:412.1px;height:15.9px;background:#a5a5a5"></div>
<div class="bar" style="left:419.9px;top:268.8px;height:159.2px;background:#f44336"></div>
<div class="bar" style="left:570.6px;top:410.3px;height:17.7px;background:#5b9bd5"></div>
<div class="bar" style="left:609.7px;top:411.6px;height:16.4px;background:#a5a5a5"></div>
<div class="bar" style="left:838.0px;top:389.8px;height:38.2px;background:#a5a5a5"></div>
<div class="bar" style="left:895.6px;top:394.2px;height:33.8px;background:#673ab7"></div>
<div class="xl" style="left:298.7px">松山湖校区学术会<br>议中心一层改建工<br>程</div>
<div class="xl" style="left:526.5px">行政楼办公室改造<br>装修项目</div>
<div class="xl" style="left:755.1px">松山湖教师村装修<br>工程（二期）</div>
<!-- table -->
<div class="th" style="left:223.0px;width:192.8px"><span style="display:inline-block;text-align:center;width:192.8px">项目名称</span></div>
<div class="th" style="left:415.8px;width:192.5px"><span style="display:inline-block;text-align:center;width:192.5px">合同名称</span></div>
<div class="th" style="left:608.3px;width:192.2px"><span style="display:inline-block;text-align:center;width:192.2px">合同金额</span></div>
<div class="th" style="left:800.5px;width:191.5px"><span style="display:inline-block;text-align:center;width:191.5px">变更金额</span></div>
<div class="th" style="border-right:none;text-align:left;left:992.0px;width:485.0px"><span style="display:inline-block;text-align:center;width:196.5px">资金情况</span></div>
<div class="abs" style="left:223px;top:585.3px;width:1254px;height:102px;background:#fff"></div>
<div class="td l" style="left:223.0px;top:585.3px;width:192.8px">教师生活区排污管网整治提升项目</div><div class="td l" style="left:415.8px;top:585.3px;width:192.5px">教师生活区排污管网整治提升项目施工</div><div class="td c" style="left:608.3px;top:585.3px;width:192.2px">774729.42</div><div class="td c" style="left:800.5px;top:585.3px;width:191.5px">0</div><div class="td c" style="left:992.0px;top:585.3px;width:196.5px">0</div><div class="td" style="border-right:none;left:1188.0px;top:585.3px;width:0.5px"></div>
<div class="td l" style="left:223.0px;top:619.6px;width:192.8px">学生宿舍热水系统升级电力配套设施改造</div><div class="td l" style="left:415.8px;top:619.6px;width:192.5px">学生宿舍热水系统升级电力配套设施改造</div><div class="td c" style="left:608.3px;top:619.6px;width:192.2px">830029.92</div><div class="td c" style="left:800.5px;top:619.6px;width:191.5px">0</div><div class="td c" style="left:992.0px;top:619.6px;width:196.5px">0</div><div class="td" style="border-right:none;left:1188.0px;top:619.6px;width:0.5px"></div>
<div class="td l" style="left:223.0px;top:653.9px;width:192.8px">学生中心室外道路设施升级改造项目</div><div class="td l" style="left:415.8px;top:653.9px;width:192.5px">学生中心室外道路设施升级改造项目施工</div><div class="td c" style="left:608.3px;top:653.9px;width:192.2px">376862.83</div><div class="td c" style="left:800.5px;top:653.9px;width:191.5px">0</div><div class="td c" style="left:992.0px;top:653.9px;width:196.5px">0</div><div class="td" style="border-right:none;left:1188.0px;top:653.9px;width:0.5px"></div>
<div class="abs" style="left:1460px;top:585.5px;width:16.6px;height:102px;background:#f1f1f1"></div>
<div class="abs" style="left:1460.3px;top:619.2px;width:14.9px;height:68px;background:#cdcdcd"></div>
<svg class="abs" style="left:1460px;top:599px" width="16" height="16" viewBox="0 0 16 16"><path d="M2.6 11.3 L7.9 4.5 L13.2 11.3" fill="none" stroke="#505050" stroke-width="2.3"/></svg>
<!-- photo -->
<svg class="abs" style="left:1005px;top:68px" width="473" height="215" viewBox="0 0 473 215">
<defs>
<clipPath id="pc"><rect x="0.4" y="0.5" width="472.2" height="213.5"/></clipPath>
<linearGradient id="sky" x1="0" y1="0" x2="0" y2="1"><stop offset="0" stop-color="#5b91da"/><stop offset="0.3" stop-color="#669ddf"/><stop offset="0.55" stop-color="#7db1e6"/><stop offset="0.75" stop-color="#a4c9ee"/><stop offset="1" stop-color="#cfe2f4"/></linearGradient>
<filter id="b8" filterUnits="userSpaceOnUse" x="-80" y="-80" width="640" height="380"><feGaussianBlur stdDeviation="8"/></filter>
<filter id="b4" filterUnits="userSpaceOnUse" x="-80" y="-80" width="640" height="380"><feGaussianBlur stdDeviation="3.4"/></filter>
<filter id="b2" filterUnits="userSpaceOnUse" x="-80" y="-80" width="640" height="380"><feGaussianBlur stdDeviation="1.7"/></filter>
<filter id="b1" x="-30%" y="-30%" width="160%" height="160%"><feGaussianBlur stdDeviation="0.6"/></filter>
<linearGradient id="stripe" x1="0" y1="0" x2="1" y2="0"><stop offset="0" stop-color="#f4f7f8"/><stop offset="0.35" stop-color="#e1e7e9"/><stop offset="0.6" stop-color="#b4bfc4"/><stop offset="0.76" stop-color="#6a777e"/><stop offset="0.88" stop-color="#8f9ba1"/><stop offset="1" stop-color="#f4f7f8"/></linearGradient>
<pattern id="sp" x="68" y="0" width="5.6" height="10" patternUnits="userSpaceOnUse"><rect width="5.6" height="10" fill="url(#stripe)"/></pattern>
<linearGradient id="wsh" x1="0" y1="0" x2="0" y2="1"><stop offset="0" stop-color="#fff" stop-opacity="0.15"/><stop offset="0.45" stop-color="#8899a0" stop-opacity="0"/><stop offset="1" stop-color="#3e4a50" stop-opacity="0.38"/></linearGradient>
<pattern id="gp" x="0" y="0" width="2.6" height="2.6" patternUnits="userSpaceOnUse"><rect width="2.6" height="2.6" fill="#cfd9dc"/><rect width="1.2" height="1.2" fill="#a9b6bb"/></pattern>
</defs>
<g clip-path="url(#pc)">
<rect width="473" height="215" fill="url(#sky)"/>
<g filter="url(#b8)"><ellipse cx="256.1" cy="47.4" rx="66.4" ry="44.3" transform="rotate(0.0 256.1 47.4)" fill="#4386de" opacity="0.45"/>
<ellipse cx="215.0" cy="94.8" rx="28.5" ry="19.0" transform="rotate(0.0 215.0 94.8)" fill="#4b8be0" opacity="0.35"/>
<ellipse cx="357.3" cy="94.8" rx="63.2" ry="9.5" transform="rotate(-22.0 357.3 94.8)" fill="#5497e4" opacity="0.35"/>
<ellipse cx="12.6" cy="12.6" rx="37.9" ry="19.0" transform="rotate(0.0 12.6 12.6)" fill="#4a84d4" opacity="0.25"/>
<ellipse cx="9.5" cy="139.1" rx="60.1" ry="47.4" transform="rotate(0.0 9.5 139.1)" fill="#fff" opacity="0.95"/>
<ellipse cx="34.8" cy="104.3" rx="37.9" ry="15.8" transform="rotate(0.0 34.8 104.3)" fill="#fff" opacity="0.55"/>
<ellipse cx="79.0" cy="41.1" rx="60.1" ry="25.3" transform="rotate(-5.0 79.0 41.1)" fill="#fff" opacity="0.38"/>
<ellipse cx="101.2" cy="47.4" rx="107.5" ry="47.4" transform="rotate(0.0 101.2 47.4)" fill="#fff" opacity="0.14"/>
<ellipse cx="34.8" cy="28.5" rx="28.5" ry="12.6" transform="rotate(0.0 34.8 28.5)" fill="#fff" opacity="0.22"/>
<ellipse cx="132.8" cy="37.9" rx="28.5" ry="11.1" transform="rotate(-20.0 132.8 37.9)" fill="#fff" opacity="0.22"/>
<ellipse cx="268.7" cy="139.1" rx="72.7" ry="22.1" transform="rotate(-3.0 268.7 139.1)" fill="#fff" opacity="0.62"/>
<ellipse cx="240.3" cy="166.0" rx="50.6" ry="10.1" transform="rotate(0.0 240.3 166.0)" fill="#fff" opacity="0.80"/>
<ellipse cx="221.3" cy="126.5" rx="22.1" ry="9.5" transform="rotate(-10.0 221.3 126.5)" fill="#fff" opacity="0.45"/>
<ellipse cx="316.2" cy="164.4" rx="44.3" ry="11.4" transform="rotate(0.0 316.2 164.4)" fill="#fff" opacity="0.60"/>
<ellipse cx="398.4" cy="79.0" rx="104.3" ry="66.4" transform="rotate(0.0 398.4 79.0)" fill="#fff" opacity="0.22"/>
<ellipse cx="360.4" cy="55.3" rx="126.5" ry="13.3" transform="rotate(-22.0 360.4 55.3)" fill="#fff" opacity="0.55"/>
<ellipse cx="395.2" cy="12.6" rx="82.2" ry="12.6" transform="rotate(-20.0 395.2 12.6)" fill="#fff" opacity="0.30"/>
<ellipse cx="392.0" cy="109.1" rx="94.8" ry="15.8" transform="rotate(-23.0 392.0 109.1)" fill="#fff" opacity="0.62"/>
<ellipse cx="417.3" cy="132.8" rx="72.7" ry="19.0" transform="rotate(-10.0 417.3 132.8)" fill="#fff" opacity="0.75"/>
<ellipse cx="448.9" cy="158.1" rx="50.6" ry="19.0" transform="rotate(0.0 448.9 158.1)" fill="#fff" opacity="0.80"/></g>
<g filter="url(#b4)"><ellipse cx="60.1" cy="86.9" rx="66.4" ry="5.1" transform="rotate(4.0 60.1 86.9)" fill="#fff" opacity="0.60"/>
<ellipse cx="94.8" cy="83.8" rx="37.9" ry="3.2" transform="rotate(8.0 94.8 83.8)" fill="#fff" opacity="0.35"/>
<ellipse cx="104.3" cy="19.0" rx="19.0" ry="3.2" transform="rotate(-15.0 104.3 19.0)" fill="#fff" opacity="0.25"/>
<ellipse cx="56.9" cy="53.7" rx="25.3" ry="3.8" transform="rotate(-10.0 56.9 53.7)" fill="#fff" opacity="0.30"/>
<ellipse cx="169.1" cy="71.1" rx="39.5" ry="3.5" transform="rotate(-17.0 169.1 71.1)" fill="#fff" opacity="0.60"/>
<ellipse cx="148.6" cy="67.0" rx="26.9" ry="2.2" transform="rotate(-26.0 148.6 67.0)" fill="#fff" opacity="0.38"/>
<ellipse cx="177.0" cy="79.0" rx="22.1" ry="1.9" transform="rotate(-14.0 177.0 79.0)" fill="#fff" opacity="0.40"/>
<ellipse cx="192.9" cy="36.4" rx="20.9" ry="1.3" transform="rotate(-82.0 192.9 36.4)" fill="#fff" opacity="0.40"/>
<ellipse cx="202.3" cy="19.0" rx="12.6" ry="0.9" transform="rotate(-75.0 202.3 19.0)" fill="#fff" opacity="0.30"/>
<ellipse cx="246.6" cy="52.2" rx="9.5" ry="1.9" transform="rotate(-10.0 246.6 52.2)" fill="#fff" opacity="0.25"/>
<ellipse cx="245.0" cy="143.9" rx="23.7" ry="4.4" transform="rotate(-4.0 245.0 143.9)" fill="#6fa6e4" opacity="0.35"/>
<ellipse cx="347.8" cy="50.6" rx="104.3" ry="2.8" transform="rotate(-23.0 347.8 50.6)" fill="#fff" opacity="0.55"/>
<ellipse cx="382.5" cy="61.7" rx="94.8" ry="3.5" transform="rotate(-21.0 382.5 61.7)" fill="#fff" opacity="0.60"/>
<ellipse cx="417.3" cy="22.1" rx="66.4" ry="2.5" transform="rotate(-24.0 417.3 22.1)" fill="#fff" opacity="0.45"/>
<ellipse cx="332.0" cy="37.9" rx="56.9" ry="1.9" transform="rotate(-26.0 332.0 37.9)" fill="#fff" opacity="0.35"/>
<ellipse cx="442.6" cy="37.9" rx="37.9" ry="2.8" transform="rotate(-22.0 442.6 37.9)" fill="#fff" opacity="0.50"/>
<ellipse cx="284.5" cy="90.1" rx="41.1" ry="3.2" transform="rotate(-20.0 284.5 90.1)" fill="#fff" opacity="0.50"/>
<ellipse cx="363.6" cy="120.1" rx="63.2" ry="3.2" transform="rotate(-22.0 363.6 120.1)" fill="#fff" opacity="0.50"/>
<ellipse cx="426.8" cy="94.8" rx="53.7" ry="3.2" transform="rotate(-24.0 426.8 94.8)" fill="#fff" opacity="0.50"/>
<ellipse cx="461.6" cy="75.9" rx="19.0" ry="6.3" transform="rotate(-28.0 461.6 75.9)" fill="#fff" opacity="0.50"/></g>
<g filter="url(#b1)"><path d="M271.9 197.6 L284.5 188.1 L303.5 185.0 L319.3 180.8 L330.4 180.2 L330.4 199.2 Z" fill="#3c5a48"/><rect x="198.5" y="189.7" width="34.8" height="12.6" fill="#b9c4c8"/><rect x="201.1" y="193.5" width="30.0" height="1.9" fill="#8c999f"/><rect x="198.5" y="196.6" width="132.8" height="9.5" fill="#a9b4b8"/><rect x="218.1" y="192.2" width="3.8" height="12.6" fill="#c9d2d5"/><rect x="243.4" y="192.2" width="3.8" height="12.6" fill="#c9d2d5"/><rect x="268.7" y="192.2" width="3.8" height="12.6" fill="#c9d2d5"/><rect x="297.2" y="192.2" width="3.8" height="12.6" fill="#c9d2d5"/></g>
<rect x="145.4" y="204.9" width="328.8" height="12.6" fill="#c5c9cb"/>
<g filter="url(#b1)" fill="#2a4632"><path d="M377.8 177.0 L381.0 158.1 L388.9 151.8 L396.8 143.9 L403.1 144.8 L411.0 153.3 L417.3 161.2 L422.1 170.7 L436.3 172.3 L448.9 170.7 L473.0 169.1 L473.0 205.5 L377.8 205.5 Z"/><ellipse cx="452.1" cy="150.2" rx="12.6" ry="8.9"/><ellipse cx="447.4" cy="143.9" rx="7.0" ry="4.4"/><ellipse cx="460.0" cy="158.1" rx="5.7" ry="3.8"/><rect x="453.4" y="156.5" width="1.9" height="44.3" fill="#6d5c4c"/><rect x="393.6" y="197.6" width="79.4" height="7.0" fill="#4d6b4c"/></g>
<polygon points="363.6,157.4 393.6,160.6 393.6,206.1 363.6,207.4" fill="url(#gp)"/>
<polygon points="331.8,161.9 363.6,157.4 363.6,174.5 328.8,174.5" fill="#e3ecee"/>
<rect x="328.8" y="174.5" width="34.8" height="32.9" fill="#cdd8db"/>
<rect x="335.8" y="177.7" width="16.4" height="26.6" fill="#66747a"/>
<rect x="340.8" y="177.7" width="1.6" height="26.6" fill="#dfe8ea"/><rect x="346.5" y="177.7" width="1.6" height="26.6" fill="#dfe8ea"/>
<path d="M353.5 180.2 L367.4 204.9" stroke="#e9f0f2" stroke-width="3.2"/>
<rect x="309.8" y="199.2" width="3.8" height="9.5" fill="#dcb424"/>
<rect x="319.3" y="196.6" width="8.9" height="11.4" fill="#7e8a8f"/>
<polygon points="68.0,90.1 57.2,92.9 46.2,208.7 64.8,208.7" fill="#d7dfe1"/>
<polygon points="68.0,90.1 198.2,117.0 198.2,209.3 64.2,209.3" fill="url(#sp)"/>
<polygon points="68.0,90.1 198.2,117.0 198.2,209.3 64.2,209.3" fill="url(#wsh)"/>
<path d="M68.0 90.4 L198.2 117.3" stroke="#f2f6f7" stroke-width="1.2"/>
<circle cx="140.1" cy="122.7" r="10.6" fill="#1c9a6c"/><circle cx="140.1" cy="122.7" r="7.6" fill="#eef7f3"/><circle cx="139.3" cy="122.7" r="5.6" fill="none" stroke="#1c9a6c" stroke-width="1.7"/><path d="M139.5 119.1 h6 v1.6 h-3.8 v1.5 h3 v1.5 h-3 v2.6 h-2.2 Z" fill="#1c9a6c" stroke="#eef7f3" stroke-width="0.5"/>
<text transform="translate(92.9 140.7) skewY(8) scale(0.62 1)" text-anchor="middle" font-family="'Liberation Serif',serif" font-size="23.5" fill="#cfa651" stroke="#b08a38" stroke-width="0.25" y="8.5">東</text>
<text transform="translate(111.3 142.9) skewY(8) scale(0.62 1)" text-anchor="middle" font-family="'Liberation Serif',serif" font-size="22.3" fill="#cfa651" stroke="#b08a38" stroke-width="0.25" y="8.0">莞</text>
<text transform="translate(129.0 145.7) skewY(8) scale(0.62 1)" text-anchor="middle" font-family="'Liberation Serif',serif" font-size="21.1" fill="#cfa651" stroke="#b08a38" stroke-width="0.25" y="7.6">理</text>
<text transform="translate(146.1 148.6) skewY(8) scale(0.62 1)" text-anchor="middle" font-family="'Liberation Serif',serif" font-size="19.2" fill="#cfa651" stroke="#b08a38" stroke-width="0.25" y="6.9">工</text>
<text transform="translate(162.2 151.1) skewY(8) scale(0.62 1)" text-anchor="middle" font-family="'Liberation Serif',serif" font-size="18.6" fill="#cfa651" stroke="#b08a38" stroke-width="0.25" y="6.7">學</text>
<text transform="translate(177.4 153.7) skewY(8) scale(0.62 1)" text-anchor="middle" font-family="'Liberation Serif',serif" font-size="17.4" fill="#cfa651" stroke="#b08a38" stroke-width="0.25" y="6.2">院</text>
<path d="M175.8 172.3 l2.6 -1 l2 1.4 l2.6 -0.6 l2.4 1" stroke="#b08a3e" stroke-width="1" fill="none"/>
<g filter="url(#b1)"><path d="M12.6 172.3 q3 -14 1 -28 M13.9 161.2 q8 -8 14 -9 M14.2 158.1 q-5 -8 -4 -14 M14.5 151.8 q6 -3 9 -9" stroke="#8aa685" stroke-width="0.9" fill="none" opacity="0.8"/><ellipse cx="23.7" cy="156.5" rx="9" ry="5" fill="#9dba96" opacity="0.45"/><ellipse cx="6.3" cy="151.8" rx="5" ry="5" fill="#9dba96" opacity="0.4"/><ellipse cx="19.0" cy="148.6" rx="6" ry="4" fill="#9dba96" opacity="0.4"/><ellipse cx="33.2" cy="185.0" rx="21.5" ry="16.4" fill="#42703a"/><ellipse cx="31.6" cy="178.6" rx="14.2" ry="7.9" fill="#5a8a4c" opacity="0.6"/><ellipse cx="61.7" cy="189.1" rx="8.9" ry="9.5" fill="#37582f"/><ellipse cx="7.9" cy="192.9" rx="8.2" ry="7.0" fill="#3a5f33"/><ellipse cx="117.0" cy="195.4" rx="6.3" ry="6.0" fill="#3a5f33"/><rect x="0" y="196.6" width="139.1" height="5.1" fill="#40683a"/></g>
<rect x="0" y="174.8" width="473" height="60" fill="#1b1d1f" opacity="0.55"/>
<rect x="0" y="200.4" width="145.4" height="20" fill="#86392a"/>
<rect x="0" y="200.4" width="145.4" height="1" fill="#9a4a38"/>
<rect x="145.4" y="208.7" width="60.7" height="8" fill="#7b3326"/>
</g></svg>
<!-- header icons -->
<svg class="abs" style="z-index:7;left:480px;top:20px" width="32" height="30" viewBox="0 0 32 30">
<defs><linearGradient id="mg" x1="0" y1="0" x2="0" y2="1"><stop offset="0" stop-color="#b4b4b4"/><stop offset="1" stop-color="#8a8a8a"/></linearGradient></defs>
<circle cx="13" cy="12.4" r="7.7" fill="none" stroke="url(#mg)" stroke-width="2.6"/>
<path d="M19 18.6 L26.6 24.8" stroke="#8e8e8e" stroke-width="3.2" stroke-linecap="round"/>
</svg>
<svg class="abs" style="z-index:7;left:1278px;top:18px" width="44" height="34" viewBox="0 0 44 34">
<ellipse cx="27.3" cy="20.4" rx="12.1" ry="9.4" fill="#fff"/>
<path d="M31 27.4 L36.2 30 L34.6 25.6 Z" fill="#fff"/>
<ellipse cx="19" cy="14.6" rx="17.4" ry="12.4" fill="#2a8cee"/>
<path d="M6.8 26.2 L9.6 21.4 L14 24.2 Z" fill="#fff"/>
<ellipse cx="19" cy="14.6" rx="14.8" ry="10" fill="#2a8cee" stroke="#fff" stroke-width="1.9"/>
<path d="M9.2 22.6 L8.6 24.6 L12 23.6 Z" fill="#2a8cee"/>
<circle cx="12.3" cy="15" r="2.5" fill="#fff"/><circle cx="19" cy="15" r="2.5" fill="#fff"/><circle cx="25.7" cy="15" r="2.5" fill="#fff"/>
</svg>
<div class="abs" style="left:1355.2px;top:23.9px;width:29.2px;height:4.4px;border-radius:2.2px;background:#fff;z-index:7"></div>
<div class="abs" style="left:1355.2px;top:34.6px;width:29.2px;height:4.4px;border-radius:2.2px;background:#fff;z-index:7"></div>
<div class="abs" style="left:1355.2px;top:45.2px;width:29.2px;height:4.4px;border-radius:2.2px;background:#fff;z-index:7"></div>
<!-- avatar -->
<svg class="abs" style="z-index:7;left:1418px;top:12px" width="46" height="46" viewBox="0 0 46 46">
<defs><clipPath id="avc"><circle cx="23" cy="23" r="22.4"/></clipPath></defs>
<circle cx="23" cy="23" r="22.4" fill="#cddcde"/>
<g clip-path="url(#avc)">
<path d="M12.5 46 L13.5 39.5 Q14 36.6 17.5 36 L28.5 36 Q32 36.6 32.5 39.5 L33.5 46 Z" fill="#9db5c4"/>
<path d="M20 35.5 L23 39 L26 35.5 L26 32 L20 32 Z" fill="#f6f4f2"/>
<path d="M22 37 L24 37 L24.6 46 L21.4 46 Z" fill="#b5543f"/>
<path d="M14.8 20.5 Q14.2 30 19.5 33.6 Q23 35.4 26.5 33.6 Q31.6 30 31.2 20 Q31 13 23 13 Q15 13 14.8 20.5 Z" fill="#fbdcd0"/>
<path d="M8.6 19.2 Q12.6 19.6 14.6 16.8 Q13.6 20.6 13.6 23.4 L15.4 23.8 Q16 19.6 21 17 Q26 15.2 30.6 18.4 L31 23.6 L32.8 23 Q34.6 14.4 30.4 9.6 Q26.8 5.4 20.6 7.4 Q14 9.6 12.6 15.4 Q11.6 18.4 8.6 19.2 Z" fill="#cd8d79"/>
<path d="M19.6 27 Q23 26.2 26.4 27 Q25.6 31 23 31 Q20.4 31 19.6 27 Z" fill="#c4564d"/>
<path d="M20.6 27.2 Q23 26.8 25.4 27.2 L25 28.2 L21 28.2 Z" fill="#fff"/>
<path d="M17 20.4 L20.4 21.2 M29 20.4 L25.8 21.2" stroke="#8c5b4a" stroke-width="0.9" fill="none"/>
<circle cx="18.9" cy="22.6" r="0.9" fill="#5a463e"/><circle cx="27.2" cy="22.6" r="0.9" fill="#5a463e"/>
</g>
</svg>
<!-- cursor -->
<svg class="abs" style="z-index:7;left:627px;top:58.5px;z-index:60" width="20" height="26" viewBox="0 0 20 26">
<path d="M2.1 2 L2.1 19.2 L6 15.6 L9 22.4 L11.9 21.2 L9 14.6 L14.6 14.6 Z" fill="#fff" stroke="#222" stroke-width="1.1" stroke-linejoin="miter"/>
</svg>
<div class="abs" style="left:0;top:688px;width:1496px;height:1px;background:#fff;z-index:60"></div><div class="abs" style="left:1494px;top:0;width:2px;height:689px;background:#fff;z-index:60"></div><div class="abs" style="left:0;top:0;width:1px;height:1px;background:#fff;z-index:60"></div>
<div id="frame"></div>
</body>
</html>
